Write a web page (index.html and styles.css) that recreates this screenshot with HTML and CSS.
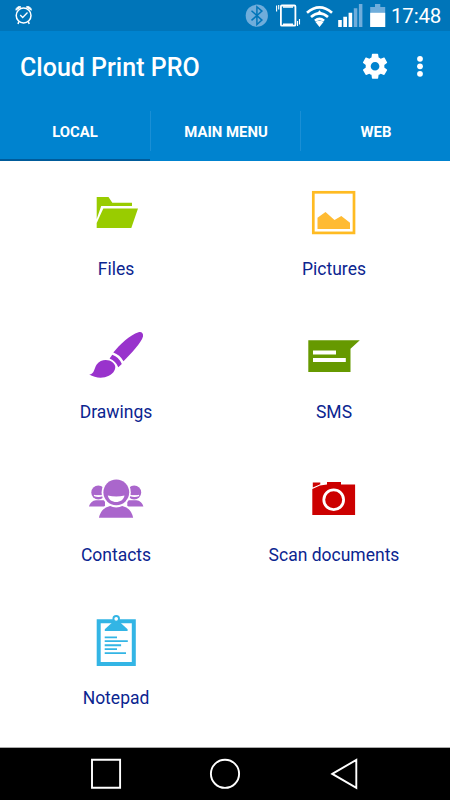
FILE: index.html
```html
<!DOCTYPE html>
<html lang="en">
<head>
<meta charset="utf-8">
<title>Cloud Print PRO</title>
<link rel="stylesheet" href="styles.css">
</head>
<body>
<div class="phone">
  <div class="status">
    <svg class="alarm" width="20" height="20" viewBox="14 5 20 20" fill="none" stroke="#fff">
      <circle cx="23.6" cy="15.5" r="7.4" stroke-width="1.5"/>
      <path d="M15.9 10.2a3.5 3.5 0 0 1 5-3.3zM31.3 10.2a3.5 3.5 0 0 0-5-3.3z" fill="#fff" stroke-width="1"/>
      <path d="M20.2 15l2.5 2.5 4.8-5" stroke-width="1.3"/>
      <path d="M18.9 21.5l-.9 2.5M28.3 21.5l.9 2.5" stroke-width="1.5"/>
    </svg>
    <svg class="signals" width="143" height="30" viewBox="245 0 143 30">
      <circle cx="256.8" cy="15.7" r="11.1" fill="#6faddb"/>
      <path d="M251.5 10.8l10.4 9.3-5 4.4V6.8l5 4.3-10.4 9.3" fill="none" stroke="#0075b9" stroke-width="1.5"/>
      <rect x="280.9" y="5.5" width="14.5" height="20.2" rx="1" fill="none" stroke="#fff" stroke-width="1.8"/>
      <path d="M283 7h10M283 24.2h10" stroke="#fff" stroke-width="1.4"/>
      <path d="M276.6 5.5v6M278.7 5v4.5M297.5 21v5M299.5 19v5.5" stroke="#fff" stroke-width="1.1"/>
      <g fill="none" stroke="#fff" stroke-width="2.7">
        <path d="M307 12.8q12.5-10.8 25 0"/>
        <path d="M311 17q8.5-7.2 17 0"/>
        <path d="M315 20.7q4.5-3.7 9 0"/>
      </g>
      <path d="M319.5 27l-4-5q4-2.5 8 0zM319.5 10.3l3.7 4.4h-7.4z" fill="#fff"/>
      <path d="M338.2 20h3.6v7h-3.6zM343.3 16.7h3.7V27h-3.7zM348.6 12.7h3.6V27h-3.6z" fill="#fff"/>
      <path d="M353.8 8.2h3.5V27h-3.5zM358.9 4h3.5v23h-3.5z" fill="#6faddb"/>
      <path d="M375 4h5.3v3h4.9v20h-15V7h4.8z" fill="#6faddb"/>
      <path d="M370.2 12.8h15V27h-15z" fill="#fff"/>
    </svg>
    <span class="clock">17:48</span>
  </div>
  <header class="toolbar">
    <h1 class="title">Cloud Print PRO</h1>
    <svg class="actions" width="70" height="36" viewBox="360 48 70 36" fill="#fff">
      <path transform="translate(360.1 51.3) scale(1.245)" d="M19.43 12.98c.04-.32.07-.64.07-.98s-.03-.66-.07-.98l2.11-1.65c.19-.15.24-.42.12-.64l-2-3.46c-.12-.22-.39-.3-.61-.22l-2.49 1c-.52-.4-1.08-.73-1.69-.98l-.38-2.65C14.46 2.18 14.25 2 14 2h-4c-.25 0-.46.18-.49.42l-.38 2.65c-.61.25-1.17.59-1.69.98l-2.49-1c-.23-.09-.49 0-.61.22l-2 3.46c-.13.22-.07.49.12.64l2.11 1.65c-.04.32-.07.65-.07.98s.03.66.07.98l-2.11 1.65c-.19.15-.24.42-.12.64l2 3.46c.12.22.39.3.61.22l2.49-1c.52.4 1.08.73 1.69.98l.38 2.65c.03.24.24.42.49.42h4c.25 0 .46-.18.49-.42l.38-2.65c.61-.25 1.17-.59 1.69-.98l2.49 1c.23.09.49 0 .61-.22l2-3.46c.12-.22.07-.49-.12-.64l-2.11-1.65zM12 15.5c-1.93 0-3.5-1.57-3.5-3.5s1.57-3.5 3.5-3.5 3.5 1.57 3.5 3.5-1.57 3.5-3.5 3.5z"/>
      <circle cx="420" cy="58.8" r="2.9"/><circle cx="420" cy="66.3" r="2.9"/><circle cx="420" cy="73.8" r="2.9"/>
    </svg>
  </header>
  <nav class="tabs">
    <a class="tab active">LOCAL</a>
    <a class="tab">MAIN MENU</a>
    <a class="tab">WEB</a>
  </nav>
  <main class="grid">
    <div class="item">
      <svg class="icon" viewBox="84 181 64 64" fill="#9c0">
        <path d="M96.7 197h11.8l3.8 5.8H132v3.3h-30.8l-4.5 13z"/>
        <path d="M103.3 208.5H138L131.3 228H96.7v-5z"/>
      </svg>
      <span class="label">Files</span>
    </div>
    <div class="item">
      <svg class="icon" viewBox="302 181 64 64">
        <rect x="313.3" y="192.3" width="40.7" height="40.6" fill="none" stroke="#fb2" stroke-width="2.7"/>
        <path d="M317.5 217.8l8-5.8 9 8 6.8-4 8.7 6.7v6.2h-32.5z" fill="#fb3"/>
      </svg>
      <span class="label">Pictures</span>
    </div>
    <div class="item">
      <svg class="icon" viewBox="84 324 64 64" fill="#93c">
        <path d="M89.2 374.6c5.5-.8 4.7-6.3 7.5-10.2 4-5.4 11.7-5.3 15.8-2.2 3.1 2.4 3.5 5.3 1.9 8.4-3.8 7.8-16.6 9.3-25.2 4z"/>
        <path d="M109.6 358.6l2.7-3.8q6.7 2.3 9.5 9.3l-3.5 3.1q-2.5-6-8.7-8.6z"/>
        <path d="M113.3 352.6c6-7.4 16.7-17.8 25.2-20.3 3-.8 5 1 4.5 4.2-1.5 5.7-12 17.4-19.5 24.7q-3.6-6.2-10.2-8.6z"/>
      </svg>
      <span class="label">Drawings</span>
    </div>
    <div class="item">
      <svg class="icon" viewBox="302 324 64 64">
        <path d="M308.3 340.3h51.5l-9.3 8.5v23.1h-42.2z" fill="#690"/>
        <path d="M313 350.6h23v4h-23zM313 357.9h32.8v4H313z" fill="#fff"/>
      </svg>
      <span class="label">SMS</span>
    </div>
    <div class="item">
      <svg class="icon" viewBox="84 467 64 64" fill="#a6c">
        <circle cx="98.3" cy="492.5" r="7"/><circle cx="134.2" cy="492.5" r="7"/>
        <path d="M89 506.6c.7-3.4 3.6-6.4 7-6.4h9v6.4zM127.3 506.6v-6.4h9c3.5 0 6.5 3 7.1 6.4z"/>
        <path d="M94 495.3q4.5 2 9 0M130 495.3q4.5 2 9 0" fill="#fff" stroke="#fff" stroke-width="1.4"/>
        <circle cx="116.2" cy="492.4" r="14.6" fill="#fff"/>
        <path d="M97.8 518.6c1.5-7.4 5.7-12.2 12.1-13.5q6.3 3.2 12.6 0c6.2 1.4 10.4 6 11.7 13.5z" stroke="#fff" stroke-width="1.6"/>
        <circle cx="116.3" cy="492.3" r="12.9"/>
        <path d="M107.8 495.5q8.5 1.8 16.7 0c-1.4 8.6-15.2 8.8-16.7 0z" fill="#fff"/>
      </svg>
      <span class="label">Contacts</span>
    </div>
    <div class="item">
      <svg class="icon" viewBox="302 467 64 64">
        <path d="M312.3 488.9l7.7-3.5 7-1V482h14v2.4h14.1V515h-42.8zM312.8 482.5h7.5v1.7l-7.5 3.2z" fill="#c00"/>
        <circle cx="333.7" cy="499.8" r="9.9" fill="none" stroke="#fff" stroke-width="2.8"/>
      </svg>
      <span class="label">Scan documents</span>
    </div>
    <div class="item">
      <svg class="icon" viewBox="84 610 64 64">
        <path d="M98.7 621.2h35.1v42.9H98.7z" fill="none" stroke="#33b5e5" stroke-width="4"/>
        <path d="M104.8 631v-1.8l8.2-7.4h6.4l8.2 7.4v1.8z" fill="#33b5e5"/>
        <circle cx="116.2" cy="618.8" r="2.8" fill="#fff" stroke="#33b5e5" stroke-width="1.9"/>
        <path d="M104.7 637.4H117M104.7 641.1h23.1M104.7 645.2h16.4M104.7 649.1H117M104.7 653.1H126" stroke="#33b5e5" stroke-width="1.9"/>
      </svg>
      <span class="label">Notepad</span>
    </div>
  </main>
  <footer class="navbar">
    <svg width="450" height="52" viewBox="0 748 450 52" fill="none" stroke="#fff" stroke-width="1.9">
      <path d="M92 759.7h28.1v28.1H92z"/>
      <circle cx="225" cy="773.8" r="14.1"/>
      <path d="M332.3 773.9l24-14v28z"/>
    </svg>
  </footer>
</div>
</body>
</html>
```

FILE: styles.css
```css
* { box-sizing: border-box; }
body { margin: 0; background: #fff; font-family: Roboto, sans-serif; }
svg { display: block; flex: none; }
.phone { width: 450px; height: 800px; display: flex; flex-direction: column; overflow: hidden; }
.status { flex: none; height: 31px; background: #0075b9; display: flex; align-items: flex-start; padding-left: 14px; color: #fff; }
.alarm { margin-top: 5px; }
.signals { margin-left: 211px; }
.clock { margin-left: 3px; font-size: 20.5px; line-height: 33px; letter-spacing: -.2px; white-space: nowrap; }
.toolbar { flex: none; height: 72px; background: #0083cf; display: flex; align-items: center; justify-content: space-between; padding: 0 20px; }
.title { margin: 2px 0 0; color: #fff; font-size: 25px; font-weight: 500; line-height: 36px; white-space: nowrap; }
.actions { margin-top: -2px; }
.tabs { flex: none; height: 58px; background: #0083cf; display: grid; grid-template-columns: repeat(3, 1fr); grid-template-rows: 58px; }
.tab { height: 58px; color: #fff; font-size: 14.9px; font-weight: 700; line-height: 58px; text-align: center; white-space: nowrap; padding-left: 2px;
  background: linear-gradient(#1a8fd5, #1a8fd5) 0 8px / 1px 40px no-repeat; }
.active { padding-left: 0; background: none; border-bottom: 2px solid #005b9a; }
.grid { flex: 1; min-height: 0; padding: 20px 7px 0; display: grid; grid-template-columns: 218px 218px; grid-template-rows: repeat(3, 143px) 110px; align-content: start; }
.item { display: flex; flex-direction: column; align-items: center; }
.icon { width: 64px; height: 64px; }
.label { margin-top: 12px; font-size: 17.5px; line-height: 24px; color: #0b2590; white-space: nowrap; }
.navbar { flex: none; height: 53px; background: #000; border-top: 1px solid #aaa; }
```
